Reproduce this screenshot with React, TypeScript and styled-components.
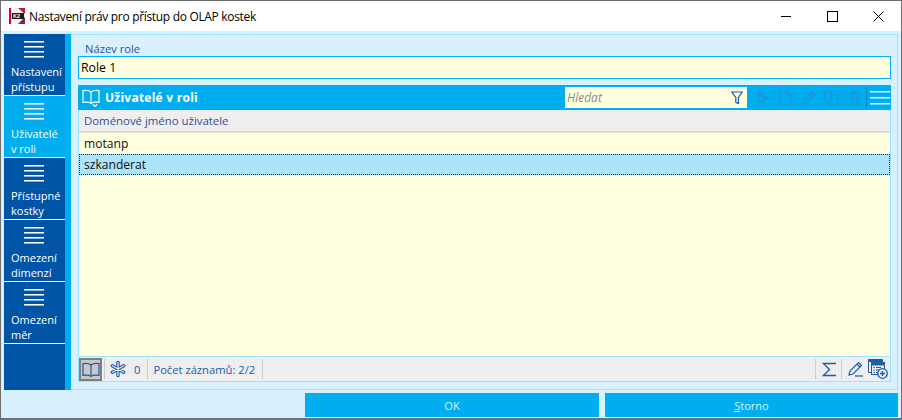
import React from 'react';
import styled, { createGlobalStyle } from 'styled-components';

const GlobalStyle = createGlobalStyle`
  html, body {
    margin: 0;
    padding: 0;
    background: #d9f1ff;
  }
  * {
    box-sizing: border-box;
  }
`;

const Window = styled.div`
  width: 902px;
  height: 420px;
  display: flex;
  flex-direction: column;
  overflow: hidden;
  border: 1px solid #6f6f6f;
  border-bottom-width: 2px;
  background: #d9f1ff;
  font-family: 'Open Sans', 'Noto Sans', sans-serif;
  font-size: 12px;
`;

const TitleBar = styled.div`
  height: 30px;
  flex: none;
  display: flex;
  align-items: center;
  background: #fff;
  padding-left: 8px;
`;

const TitleText = styled.span`
  margin-left: 4px;
  font-size: 12px;
  letter-spacing: -0.32px;
  color: #000;
`;

const WindowButtons = styled.div`
  margin-left: auto;
  display: flex;
  height: 100%;
`;

const WindowButton = styled.div`
  width: 46px;
  display: flex;
  align-items: center;
  justify-content: center;
`;

const Body = styled.div`
  flex: 1;
  min-height: 0;
  display: flex;
  flex-direction: column;
  padding: 3px 3px 1px 3px;
`;

const Workspace = styled.div`
  height: 356px;
  flex: none;
  display: flex;
`;

const Sidebar = styled.nav`
  width: 67px;
  flex: none;
  display: flex;
  flex-direction: column;
  background: #0054a6;
  border-right: 6px solid #00aeef;
`;

const NavItem = styled.div<{ $active?: boolean }>`
  height: 62px;
  flex: none;
  display: flex;
  flex-direction: column;
  padding: 7px 0 0 7px;
  background: ${({ $active }) => ($active ? '#00aeef' : '#0054a6')};
  border-bottom: 1px solid #fff;
  color: #fff;
  font-size: 11px;
  line-height: 15px;
`;

const NavIcon = styled.svg`
  display: block;
  width: 20px;
  height: 17px;
  margin: 0 0 6px 13px;
  flex: none;
`;

const Main = styled.main`
  flex: 1;
  min-width: 0;
  display: flex;
  flex-direction: column;
  border: 1px solid #99e5ff;
  border-left: none;
  padding: 7px 6px 7px 7px;
`;

const FieldLabel = styled.label`
  height: 14px;
  margin-left: 7px;
  line-height: 14px;
  font-size: 11.2px;
  color: #2e4f9e;
`;

const RoleInput = styled.div`
  height: 23px;
  flex: none;
  border: 1px solid #00b4f5;
  background: #ffffe0;
  padding-left: 2px;
  line-height: 21px;
  font-size: 12.3px;
  color: #000;
`;

const GridPanel = styled.section`
  margin-top: 6px;
  flex: 1;
  min-height: 0;
  display: flex;
  flex-direction: column;
  border: 1px solid #99e5ff;
  border-top: none;
`;

const GridHeader = styled.header`
  height: 25px;
  flex: none;
  margin: 0 -1px;
  display: flex;
  align-items: center;
  background: #00aeef;
  padding-left: 4px;
  color: #fff;
`;

const GridTitle = styled.h2`
  margin: 0 0 0 5px;
  font-size: 12px;
  font-weight: 700;
  letter-spacing: 0.25px;
`;

const SearchBox = styled.div`
  width: 182px;
  height: 21px;
  margin-left: auto;
  display: flex;
  align-items: center;
  justify-content: space-between;
  background: #ffffe0;
  padding: 0 4px 0 2px;
  font-size: 12px;
  font-style: italic;
  color: #8c8c8c;
`;

const HeaderTools = styled.div`
  display: flex;
  align-items: center;
  height: 100%;
  margin-left: 4px;
`;

const ToolSlot = styled.span`
  width: 23px;
  display: flex;
  justify-content: center;
`;

const MenuSlot = styled.div`
  height: 21px;
  width: 25px;
  display: flex;
  align-items: center;
  justify-content: center;
  border-left: 1px solid #0a7fc0;
  padding-left: 1px;
`;

const ColumnHeader = styled.div`
  height: 22px;
  flex: none;
  background: #eeeeee;
  border-bottom: 1px solid #d4d4d4;
  padding-left: 5px;
  line-height: 21px;
  font-size: 11.4px;
  color: #2e4f9e;
`;

const Rows = styled.div`
  flex: 1;
  min-height: 0;
  background: #ffffe0;
`;

const Row = styled.div<{ $selected?: boolean }>`
  height: ${({ $selected }) => ($selected ? '21px' : '22px')};
  padding-left: 5px;
  line-height: ${({ $selected }) => ($selected ? '20px' : '22px')};
  font-size: 12.1px;
  color: #111;
  background: ${({ $selected }) => ($selected ? '#aee4fb' : 'transparent')};
  border-top: 1px ${({ $selected }) => ($selected ? 'dotted #222' : 'solid #e6e6d2')};
  border-bottom: 1px ${({ $selected }) => ($selected ? 'dotted #222' : 'solid transparent')};
  ${({ $selected }) => $selected && 'border-left: 1px dotted #222; border-right: 1px dotted #222; padding-left: 4px;'}
`;

const StatusBar = styled.footer`
  height: 25px;
  flex: none;
  display: flex;
  align-items: center;
  background: #eeeeee;
  border-top: 1px solid #99e5ff;
  color: #1c5caa;
  font-size: 11.2px;
`;

const ViewToggle = styled.div`
  width: 23px;
  height: 23px;
  display: flex;
  align-items: center;
  justify-content: center;
  background: #c8c8c8;
  border: 2px solid #808080;
  margin-right: 2px;
`;

const StatusCell = styled.div`
  height: 20px;
  display: flex;
  align-items: center;
  gap: 8px;
  border-left: 1px solid #cccccc;
  padding: 0 7px 0 5px;
`;

const StatusEnd = styled.div`
  height: 20px;
  border-left: 1px solid #cccccc;
`;

const StatusTools = styled.div`
  margin-left: auto;
  display: flex;
  align-items: center;
`;

const StatusTool = styled.div`
  height: 20px;
  display: flex;
  align-items: center;
  padding: 0 4px 0 6px;
  border-left: 1px solid #cccccc;
`;

const StatusIconOnly = styled.div`
  display: flex;
  align-items: center;
  padding-right: 2px;
`;

const Actions = styled.div`
  height: 24px;
  margin-top: 3px;
  flex: none;
  display: flex;
  justify-content: flex-end;
  gap: 6px;
`;

const ActionButton = styled.button<{ $width: number }>`
  width: ${({ $width }) => $width}px;
  height: 24px;
  border: none;
  padding: 0;
  background: #00aeef;
  color: #d9f1ff;
  font-family: inherit;
  font-size: 11px;
  u {
    text-underline-offset: 1px;
  }
`;

const Hamburger = () => (
  <NavIcon viewBox="0 0 20 17">
    {[0, 5, 10, 15].map((y) => (
      <g key={y}>
        <rect x="0" y={y} width="20" height="1" fill="#fff" />
        <rect x="0" y={y + 1} width="20" height="1" fill="#fff" opacity="0.55" />
      </g>
    ))}
  </NavIcon>
);

const K2Logo = () => (
  <svg width="16" height="18" viewBox="0 0 16 18">
    <rect x="0" y="1" width="2" height="16" fill="#d4003a" />
    <rect x="2" y="1" width="14" height="16" fill="#f3f3f3" />
    <path d="M9 1 L16 1 L16 7 Z" fill="#a8233c" />
    <path d="M9 17 L16 17 L16 10 Z" fill="#7a2a3a" />
    <rect x="3" y="6" width="12" height="6" fill="#1a1a1a" />
    <text x="4" y="11" fontSize="5.5" fontWeight="700" fill="#fff" fontFamily="'Liberation Sans', sans-serif">K2</text>
  </svg>
);

const MinimizeIcon = () => (
  <svg width="10" height="10" viewBox="0 0 10 10">
    <rect x="0" y="5" width="10" height="1" fill="#000" />
  </svg>
);

const MaximizeIcon = () => (
  <svg width="11" height="11" viewBox="0 0 11 11" fill="none" stroke="#000" strokeWidth="1">
    <rect x="0.5" y="0.5" width="10" height="10" />
  </svg>
);

const CloseIcon = () => (
  <svg width="11" height="11" viewBox="0 0 11 11" fill="none" stroke="#000" strokeWidth="1">
    <path d="M0.5 0.5 L10.5 10.5 M10.5 0.5 L0.5 10.5" />
  </svg>
);

const BookIcon = ({ color, tail }: { color: string; tail?: boolean }) => (
  <svg width="18" height={tail ? 18 : 15} viewBox={tail ? '0 0 18 18' : '0 0 18 15'} fill="none" stroke={color} strokeWidth="1.2">
    <path d="M9 3 C7.5 1.6 4 1.2 1 1.6 V13.4 C4 13 7.5 13.2 9 14.4 C10.5 13.2 14 13 17 13.4 V1.6 C14 1.2 10.5 1.6 9 3 Z" />
    <path d="M9 3 V14.4" />
    {tail && <path d="M11 15.5 L13 17.5 L15 15.5" />}
  </svg>
);

const FunnelIcon = () => (
  <svg width="12" height="14" viewBox="0 0 12 14" fill="none" stroke="#1c5caa" strokeWidth="1.2">
    <path d="M0.8 1 H11.2 L7.4 6.4 V12.6 L4.8 11.4 V6.4 Z" />
  </svg>
);

const dimTool = '#1f93cf';

const PlayIcon = () => (
  <svg width="12" height="14" viewBox="0 0 12 14" fill="none" stroke={dimTool} strokeWidth="1.2">
    <path d="M1.5 2 V12 L10 7 Z" />
  </svg>
);

const PageIcon = () => (
  <svg width="13" height="16" viewBox="0 0 13 16" fill="none" stroke={dimTool} strokeWidth="1.2">
    <path d="M1 1 H8 L12 5 V15 H1 Z M8 1 V5 H12" />
  </svg>
);

const PencilIcon = ({ color }: { color: string }) => (
  <svg width="16" height="16" viewBox="0 0 16 16" fill="none" stroke={color} strokeWidth="1.2">
    <path d="M1.5 14.5 L2.5 10.5 L11.5 1.5 L14.5 4.5 L5.5 13.5 Z M10 3 L13 6" />
  </svg>
);

const EditFieldIcon = () => (
  <svg width="16" height="16" viewBox="0 0 16 16" fill="none" stroke="#1c5caa" strokeWidth="1.2">
    <path d="M1 14 L2 10 L10.5 1.5 L13.5 4.5 L5 13 Z M9 3 L12 6" />
    <path d="M7 15 H15" />
  </svg>
);

const CopyIcon = () => (
  <svg width="15" height="16" viewBox="0 0 15 16" fill="none" stroke={dimTool} strokeWidth="1.2">
    <path d="M1 1 H7 V12 H1 Z M5 4 H14 V15 H5 V12" />
  </svg>
);

const TrashIcon = () => (
  <svg width="12" height="16" viewBox="0 0 12 16" fill="none" stroke={dimTool} strokeWidth="1.2">
    <path d="M1 3 H11 M4 3 V1 H8 V3 M2 3 V15 H10 V3 M4.5 6 V12 M7.5 6 V12" />
  </svg>
);

const MenuIcon = () => (
  <svg width="20" height="14" viewBox="0 0 20 14">
    {[0, 6, 12].map((y) => (
      <g key={y}>
        <rect x="0" y={y} width="20" height="1" fill="#fff" />
        <rect x="0" y={y + 1} width="20" height="1" fill="#fff" opacity="0.45" />
      </g>
    ))}
  </svg>
);

const snowflakeArms = 'M8 1.5 V14.5 M2.4 4.75 L13.6 11.25 M13.6 4.75 L2.4 11.25';

const SnowflakeIcon = () => (
  <svg width="16" height="16" viewBox="0 0 16 16" fill="none" strokeLinecap="round">
    <path d={snowflakeArms} stroke="#1c5caa" strokeWidth="3.4" />
    <path d={snowflakeArms} stroke="#eeeeee" strokeWidth="1.2" />
  </svg>
);

const SigmaIcon = () => (
  <svg width="15" height="15" viewBox="0 0 15 15" fill="none" stroke="#1c5caa" strokeWidth="1.3">
    <path d="M14 1.5 H1.5 L7.5 7.5 L1.5 13.5 H14" />
  </svg>
);

const NewRecordIcon = () => (
  <svg width="20" height="20" viewBox="0 0 20 20" fill="none" stroke="#1c5caa" strokeWidth="1">
    <path d="M0.5 0.5 H14.5 V3 M0.5 0.5 V13.5 H3" />
    <path d="M0.5 1 H14.5 V2.5 H0.5 Z" fill="#1c5caa" />
    <rect x="3.5" y="3.5" width="13" height="12" fill="#eeeeee" />
    <path d="M3.5 4 H16.5 V6 H3.5 Z" fill="#1c5caa" />
    <path d="M5.5 8.5 H7 M8 8.5 H13 M5.5 11 H7 M8 11 H12 M5.5 13.5 H7 M8 13.5 H10" />
    <circle cx="14.5" cy="14.5" r="4.8" fill="#eeeeee" strokeWidth="1.3" />
    <path d="M14.5 12 V17 M12 14.5 H17" strokeWidth="1.4" />
  </svg>
);

const navItems = [
  { label: ['Nastavení', 'přístupu'] },
  { label: ['Uživatelé', 'v roli'], active: true },
  { label: ['Přístupné', 'kostky'] },
  { label: ['Omezení', 'dimenzí'] },
  { label: ['Omezení', 'měr'] },
];

export default function App() {
  return (
    <>
      <GlobalStyle />
      <Window>
        <TitleBar>
          <K2Logo />
          <TitleText>Nastavení práv pro přístup do OLAP kostek</TitleText>
          <WindowButtons>
            <WindowButton><MinimizeIcon /></WindowButton>
            <WindowButton><MaximizeIcon /></WindowButton>
            <WindowButton><CloseIcon /></WindowButton>
          </WindowButtons>
        </TitleBar>
        <Body>
          <Workspace>
            <Sidebar>
              {navItems.map((item) => (
                <NavItem key={item.label.join(' ')} $active={item.active}>
                  <Hamburger />
                  <span>{item.label[0]}</span>
                  <span>{item.label[1]}</span>
                </NavItem>
              ))}
            </Sidebar>
            <Main>
              <FieldLabel>Název role</FieldLabel>
              <RoleInput>Role 1</RoleInput>
              <GridPanel>
                <GridHeader>
                  <BookIcon color="#fff" tail />
                  <GridTitle>Uživatelé v roli</GridTitle>
                  <SearchBox>
                    Hledat
                    <FunnelIcon />
                  </SearchBox>
                  <HeaderTools>
                    <ToolSlot><PlayIcon /></ToolSlot>
                    <ToolSlot><PageIcon /></ToolSlot>
                    <ToolSlot><PencilIcon color={dimTool} /></ToolSlot>
                    <ToolSlot><CopyIcon /></ToolSlot>
                    <ToolSlot><TrashIcon /></ToolSlot>
                    <MenuSlot><MenuIcon /></MenuSlot>
                  </HeaderTools>
                </GridHeader>
                <ColumnHeader>Doménové jméno uživatele</ColumnHeader>
                <Rows>
                  <Row>motanp</Row>
                  <Row $selected>szkanderat</Row>
                </Rows>
                <StatusBar>
                  <ViewToggle><BookIcon color="#1c5caa" /></ViewToggle>
                  <StatusCell>
                    <SnowflakeIcon />
                    <span>0</span>
                  </StatusCell>
                  <StatusCell>Počet záznamů: 2/2</StatusCell>
                  <StatusEnd />
                  <StatusTools>
                    <StatusTool><SigmaIcon /></StatusTool>
                    <StatusTool><EditFieldIcon /></StatusTool>
                    <StatusIconOnly><NewRecordIcon /></StatusIconOnly>
                  </StatusTools>
                </StatusBar>
              </GridPanel>
            </Main>
          </Workspace>
          <Actions>
            <ActionButton $width={294}>OK</ActionButton>
            <ActionButton $width={293}><u>S</u>torno</ActionButton>
          </Actions>
        </Body>
      </Window>
    </>
  );
}
